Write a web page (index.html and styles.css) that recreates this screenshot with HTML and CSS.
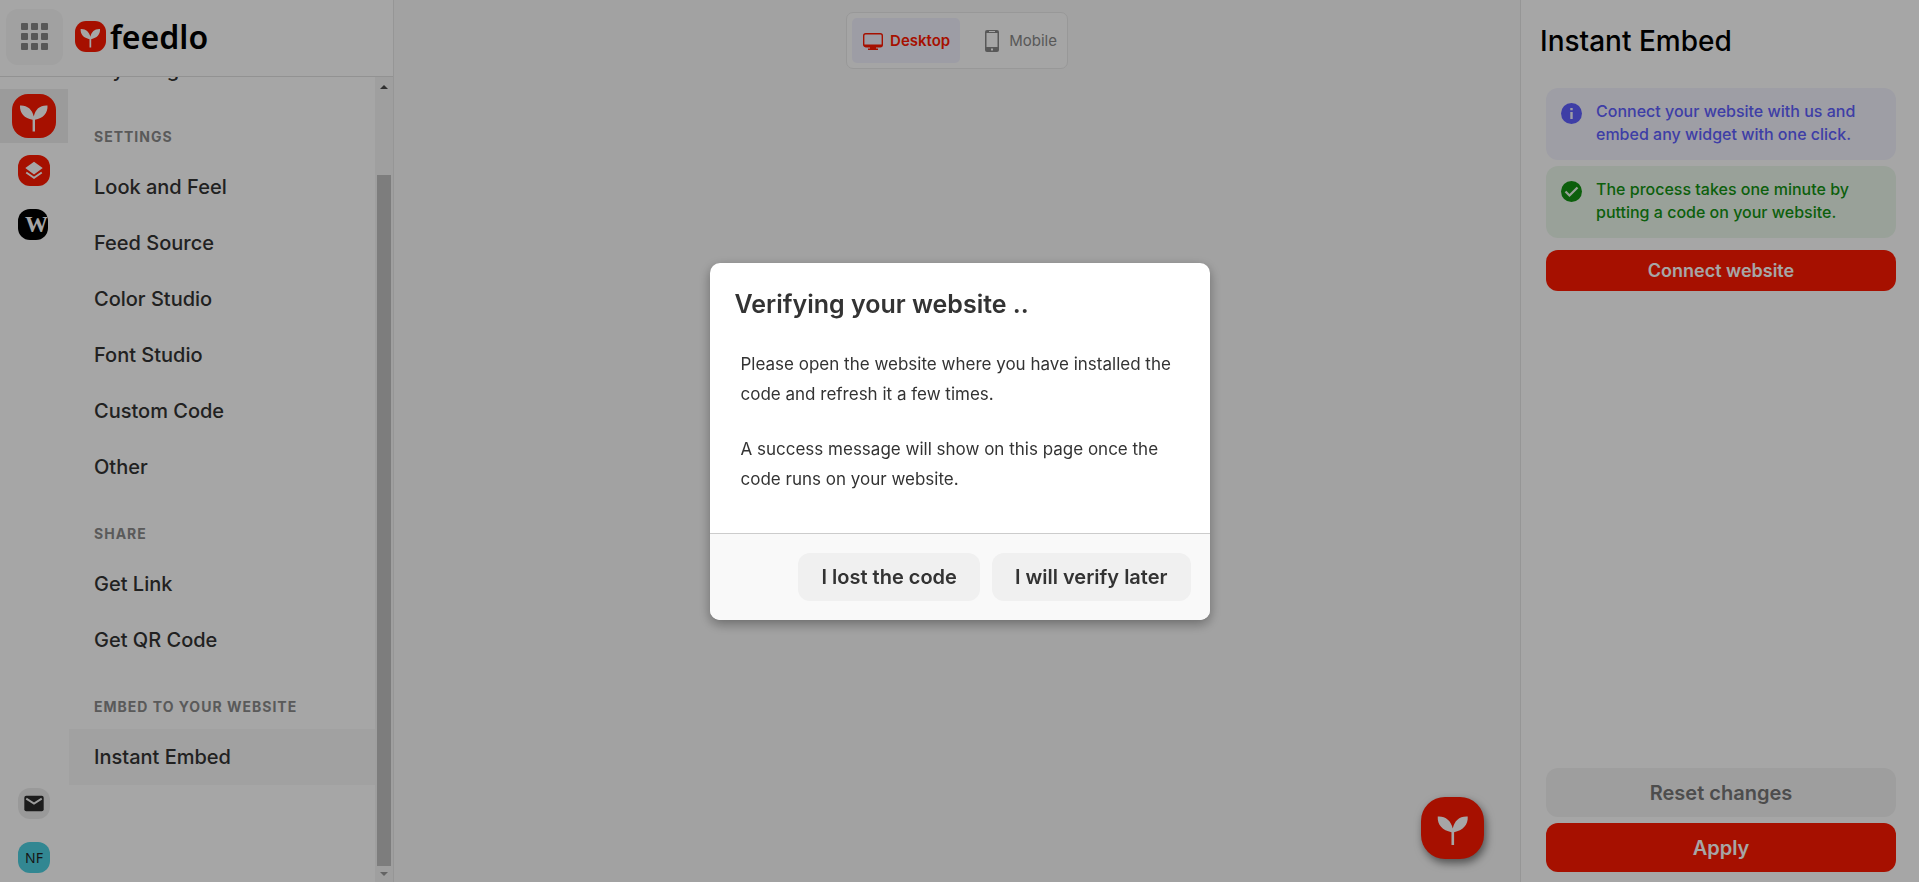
FILE: index.html
```html
<!DOCTYPE html>
<html lang="en">
  <head>
    <meta charset="UTF-8" />
    <meta name="viewport" content="width=device-width, initial-scale=1.0" />
    <title>Feedlo - Instant Embed</title>
    <link rel="stylesheet" href="styles.css">
  </head>
  <body>
    <!-- shared icon shapes -->
    <svg class="sprite" aria-hidden="true">
      <symbol id="sprout" viewBox="0 0 44 44">
        <path fill="currentColor" d="M8 11.500C15 11 20 15 21.800 22.500C23.500 15 28 11 35.500 11.500C36 19 31 24.500 23 25.800V37.500H20.600V25.800C12.500 24.500 7.500 19 8 11.500z" />
      </symbol>
    </svg>

    <div class="app">
      <aside class="sidebar">
        <header class="brand">
          <button class="apps-btn" aria-label="Apps">
            <svg width="27" height="27" viewBox="0 0 27 27" fill="currentColor">
              <rect x="0" y="0" width="7" height="7" rx="1" /><rect x="10" y="0" width="7" height="7" rx="1" /><rect x="20" y="0" width="7" height="7" rx="1" />
              <rect x="0" y="10" width="7" height="7" rx="1" /><rect x="10" y="10" width="7" height="7" rx="1" /><rect x="20" y="10" width="7" height="7" rx="1" />
              <rect x="0" y="20" width="7" height="7" rx="1" /><rect x="10" y="20" width="7" height="7" rx="1" /><rect x="20" y="20" width="7" height="7" rx="1" />
            </svg>
          </button>
          <a class="logo" href="#">
            <span class="logo-mark"><svg><use href="#sprout" /></svg></span>
            <span class="logo-text">feedlo</span>
          </a>
        </header>

        <div class="sidebar-body">
          <div class="rail">
            <a class="rail-item active" href="#" aria-label="Feedlo"><span class="tile tile-lg"><svg><use href="#sprout" /></svg></span></a>
            <a class="rail-item" href="#" aria-label="Layers">
              <span class="tile">
                <svg viewBox="0 0 32 32">
                  <path fill="currentColor" d="M16 7l9 6.500-9 6.500-9-6.500z" />
                  <path fill="none" stroke="currentColor" stroke-width="2" d="M8 18l8 5.500 8-5.500" />
                </svg>
              </span>
            </a>
            <a class="rail-item" href="#" aria-label="WordPress"><span class="tile tile-wp">W</span></a>
            <span class="rail-space"></span>
            <a class="rail-item" href="#" aria-label="Messages">
              <span class="tile tile-mail">
                <svg viewBox="0 0 32 32">
                  <rect x="6" y="8" width="20" height="16" rx="2" fill="#2b2b2b" />
                  <path d="M8 11l8 5 8-5" fill="none" stroke="#f0f0f0" stroke-width="2" />
                </svg>
              </span>
            </a>
            <a class="rail-item" href="#" aria-label="Account"><span class="tile tile-user">NF</span></a>
          </div>

          <nav class="menu">
            <div class="menu-list">
              <a href="#">My Widgets</a>
              <h3>Settings</h3>
              <a href="#">Look and Feel</a>
              <a href="#">Feed Source</a>
              <a href="#">Color Studio</a>
              <a href="#">Font Studio</a>
              <a href="#">Custom Code</a>
              <a href="#">Other</a>
              <h3>Share</h3>
              <a href="#">Get Link</a>
              <a href="#">Get QR Code</a>
              <h3>Embed to your website</h3>
              <a class="active" href="#">Instant Embed</a>
            </div>
          </nav>

          <div class="scrollbar" aria-hidden="true">
            <svg class="arrow" viewBox="0 0 14 21"><path d="M3 12l4-4 4 4z" fill="#4a4a4a" /></svg>
            <span class="scroll-space"></span>
            <span class="scroll-thumb"></span>
            <svg class="arrow arrow-down" viewBox="0 0 14 16"><path d="M3 6l4 4 4-4z" fill="#9a9a9a" /></svg>
          </div>
        </div>
      </aside>

      <main class="stage">
        <div class="device-switch">
          <button class="active">
            <svg width="22" height="20" viewBox="0 0 22 20">
              <rect x="1.700" y="2.700" width="18.600" height="13" rx="2" fill="none" stroke="currentColor" stroke-width="1.400" />
              <path fill="currentColor" d="M2 13.500h18V15l-1 1H3l-1-1zM8 16h6v1.500h2V19H6v-1.500h2z" />
            </svg>
            Desktop
          </button>
          <button>
            <svg width="14" height="24" viewBox="0 0 14 24">
              <path fill="currentColor" fill-rule="evenodd" d="M2 1h10a2 2 0 0 1 2 2v18a2 2 0 0 1-2 2H2a2 2 0 0 1-2-2V3a2 2 0 0 1 2-2zm-.500 3v14h11V4zm2.500-2v1h6V2zm2 17.500v2h2v-2z" />
            </svg>
            Mobile
          </button>
        </div>
        <button class="fab" aria-label="Open Feedlo help"><svg><use href="#sprout" /></svg></button>
      </main>

      <aside class="panel">
        <h1>Instant Embed</h1>
        <div class="panel-body">
          <div class="note note-info">
            <svg width="21" height="21" viewBox="0 0 21 21">
              <circle cx="10.500" cy="10.500" r="10.500" fill="currentColor" />
              <path fill="#f3f3fe" d="M9.300 5h2.400v2.300H9.300zM9.300 9h2.400v7H9.300z" />
            </svg>
            <p>Connect your website with us and embed any widget with one click.</p>
          </div>
          <div class="note note-success">
            <svg width="21" height="21" viewBox="0 0 21 21">
              <circle cx="10.500" cy="10.500" r="10.500" fill="currentColor" />
              <path d="M4.500 10.500l4 4 8-8" fill="none" stroke="#ecf8ec" stroke-width="2.200" />
            </svg>
            <p>The process takes one minute by putting a code on your website.</p>
          </div>
          <button class="btn btn-connect">Connect website</button>
          <div class="panel-actions">
            <button class="btn btn-reset">Reset changes</button>
            <button class="btn">Apply</button>
          </div>
        </div>
      </aside>
    </div>

    <div class="overlay">
      <div class="modal" role="dialog" aria-modal="true" aria-labelledby="modalTitle">
        <div class="modal-body">
          <h2 id="modalTitle">Verifying your website ..</h2>
          <p>Please open the website where you have installed the code and refresh it a few times.</p>
          <p>A success message will show on this page once the code runs on your website.</p>
        </div>
        <div class="modal-footer">
          <button>I lost the code</button>
          <button>I will verify later</button>
        </div>
      </div>
    </div>
  </body>
</html>
```
FILE: styles.css
```css
* {
  margin: 0;
  padding: 0;
  box-sizing: border-box;
}

body {
  font-family: "Inter", sans-serif;
  color: #333;
  background-color: #fff;
  height: 100vh;
  overflow: hidden;
}

a {
  color: inherit;
  text-decoration: none;
}

button {
  font-family: inherit;
  border: none;
  cursor: pointer;
}

.sprite {
  display: none;
}

.app {
  display: flex;
  height: 100vh;
}

/* sidebar */
.sidebar {
  display: flex;
  flex-direction: column;
  width: 394px;
  border-right: 1px solid #e6e6e6;
}

.brand {
  display: flex;
  align-items: center;
  gap: 12px;
  height: 77px;
  padding: 0 6px 3px;
  border-bottom: 1px solid #e0e0e0;
}

.apps-btn {
  display: flex;
  justify-content: center;
  align-items: center;
  width: 57px;
  height: 56px;
  border-radius: 12px;
  background-color: #f7f7f7;
  color: #888;
}

.logo {
  display: flex;
  align-items: center;
  gap: 4px;
}

.logo-mark {
  width: 31px;
  height: 31px;
  border-radius: 11px;
  background-color: #ff1900;
  color: #fff;
}

.logo-mark svg,
.tile svg {
  display: block;
  width: 100%;
  height: 100%;
}

.logo-text {
  font-family: "Noto Sans", sans-serif;
  font-size: 32px;
  font-weight: 600;
  line-height: 32px;
  color: #000;
}

.sidebar-body {
  display: flex;
  flex: 1;
  min-height: 0;
}

.rail {
  display: flex;
  flex-direction: column;
  width: 68px;
  margin-bottom: -2px;
  padding-top: 12px;
}

.rail-item {
  display: flex;
  justify-content: center;
  align-items: center;
  height: 54px;
}

.rail-item.active {
  background-color: #efefef;
}

.rail-space {
  flex: 1;
}

.tile {
  width: 32px;
  height: 31px;
  border-radius: 12px;
  overflow: hidden;
  background-color: #ff1900;
  color: #fff;
}

.tile-lg {
  width: 44px;
  height: 44px;
  border-radius: 16px;
}

.tile-wp {
  width: 30px;
  margin-right: 2px;
  padding-left: 7px;
  background-color: #000;
  font-family: "Liberation Serif", serif;
  font-size: 23px;
  font-weight: 700;
  line-height: 31px;
}

.tile-mail {
  background-color: #ececec;
}

.tile-user {
  background-color: #4ed0e0;
  color: #222;
  font-family: "Noto Sans", sans-serif;
  font-size: 14px;
  line-height: 31px;
  text-align: center;
}

.menu {
  flex: 1;
  overflow: hidden;
}

/* list is scrolled down past its first entries */
.menu-list {
  margin-top: -35px;
}

.menu a {
  display: block;
  margin-left: 1px;
  padding-left: 25px;
  font-size: 20px;
  font-weight: 500;
  line-height: 56px;
}

.menu a.active {
  background-color: #f7f7f7;
}

.menu h3 {
  margin: 29px 0 12px;
  padding-left: 26px;
  font-size: 14px;
  font-weight: 700;
  line-height: 20px;
  letter-spacing: 1px;
  text-transform: uppercase;
  color: #8a8a8a;
}

.scrollbar {
  display: flex;
  flex-direction: column;
  width: 18px;
  padding: 0 2px;
  background-color: #f5f5f5;
}

.arrow {
  width: 14px;
  height: 21px;
}

.arrow-down {
  height: 16px;
}

.scroll-space {
  flex: 1;
}

.scroll-thumb {
  flex: 9;
  background-color: #c1c1c1;
}

/* preview */
.stage {
  flex: 1;
  display: flex;
  flex-direction: column;
  justify-content: space-between;
  align-items: center;
  padding: 12px 36px 23px;
  background-color: #f9f9f9;
}

.device-switch {
  display: flex;
  padding: 5px;
  border: 1px solid #eaeaea;
  border-radius: 7px;
  background-color: #fdfdfd;
}

.device-switch button {
  display: flex;
  align-items: center;
  gap: 6px;
  height: 45px;
  padding: 0 10px;
  border-radius: 5px;
  background: none;
  font-size: 15px;
  color: #888;
}

.device-switch button + button {
  gap: 10px;
  padding: 0 5px 0 25px;
}

.device-switch button.active {
  background-color: #f2f2fe;
  color: #ff1900;
  font-weight: 600;
}

.fab {
  align-self: flex-end;
  width: 63px;
  height: 62px;
  border-radius: 24px;
  background-color: #ff1900;
  color: #fff;
  box-shadow: 2px 4px 8px rgba(0, 0, 0, 0.5);
}

.fab svg {
  display: block;
  width: 48px;
  height: 48px;
  margin: 0 auto;
}

/* settings panel */
.panel {
  display: flex;
  flex-direction: column;
  width: 399px;
  border-left: 1px solid #e6e6e6;
}

.panel h1 {
  padding: 24px 19px 30px;
  font-size: 28px;
  font-weight: 500;
  line-height: 34px;
  color: #000;
}

.panel-body {
  display: flex;
  flex: 1;
  flex-direction: column;
  padding: 0 23px 10px 25px;
}

.note {
  display: flex;
  gap: 14px;
  margin-bottom: 6px;
  padding: 12px 30px 14px 15px;
  border-radius: 12px;
  font-size: 16px;
  font-weight: 500;
  line-height: 23px;
}

.note svg {
  flex: none;
  margin-top: 3px;
}

.note-info {
  background-color: #f3f3fe;
  color: #6060ff;
}

.note-success {
  background-color: #ecf8ec;
  color: #139313;
}

.btn {
  height: 49px;
  border-radius: 12px;
  background-color: #ff1900;
  color: #fff;
  font-size: 20px;
  font-weight: 600;
}

.btn-connect {
  height: 41px;
  margin-top: 6px;
  font-size: 18px;
}

.btn-reset {
  background-color: #f3f3f3;
  color: #777;
}

.panel-actions {
  display: flex;
  flex-direction: column;
  gap: 6px;
  margin-top: auto;
}

/* modal */
.overlay {
  position: fixed;
  inset: 0;
  display: flex;
  justify-content: center;
  align-items: center;
  background-color: rgba(0, 0, 0, 0.35);
}

.modal {
  width: 500px;
  border-radius: 10px;
  overflow: hidden;
  background-color: #fff;
  box-shadow: 0 4px 12px rgba(0, 0, 0, 0.35);
}

.modal-body {
  padding: 24px 25px 39px;
}

.modal h2 {
  margin-bottom: 28px;
  font-size: 25px;
  font-weight: 600;
  line-height: 34px;
}

.modal p {
  padding: 0 6px;
  font-size: 17px;
  line-height: 30px;
}

.modal p + p {
  margin-top: 25px;
}

.modal-footer {
  display: flex;
  justify-content: flex-end;
  gap: 12px;
  padding: 19px;
  border-top: 1px solid #ccc;
  background-color: #f9f9f9;
}

.modal-footer button {
  height: 48px;
  padding: 0 23px;
  border-radius: 12px;
  background-color: #f0f0f0;
  color: #333;
  font-size: 20px;
  font-weight: 600;
}
```
